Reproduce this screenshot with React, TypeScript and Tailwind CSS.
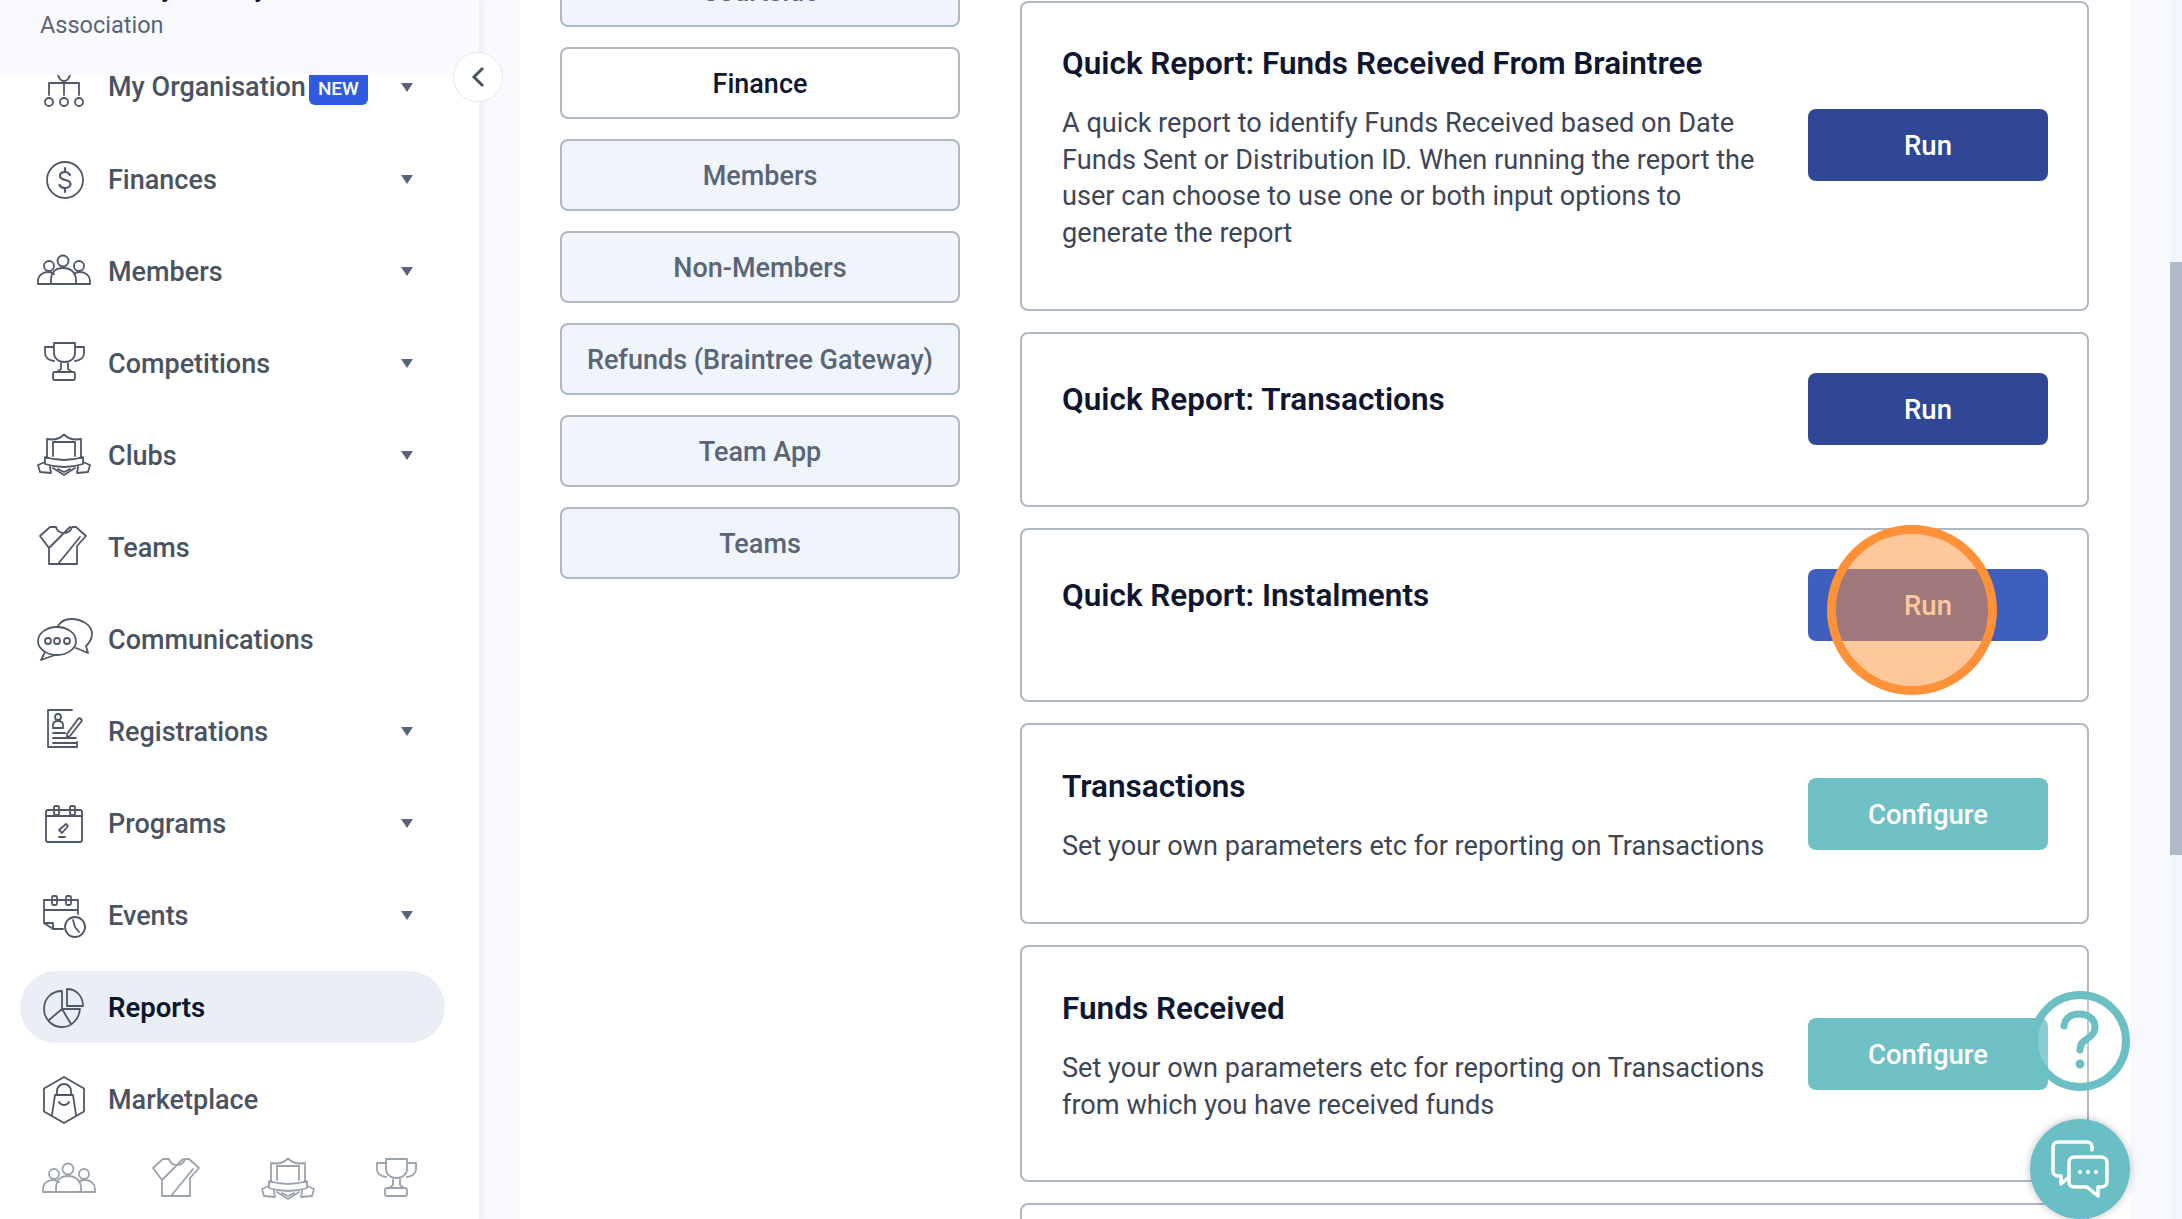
import React from 'react';

type IconProps = { className?: string };

const Ico = ({ className = 'text-[#4f5868]', children }: IconProps & { children: React.ReactNode }) => (
  <svg width={56} height={56} viewBox="0 0 56 56" fill="none" stroke="currentColor" strokeWidth={1.8} strokeLinecap="round" strokeLinejoin="round" className={className}>
    {children}
  </svg>
);

const OrgIcon = (p: IconProps) => (
  <Ico {...p}>
    <path d="M21 16c1 4 3 6 6 6s5-2 6-6M27 22v14M12 36V24h30v12" />
    <circle cx="12" cy="43" r="4" /><circle cx="27" cy="43" r="4" /><circle cx="42" cy="43" r="4" />
  </Ico>
);
const DollarIcon = (p: IconProps) => (
  <Ico {...p}>
    <circle cx="28" cy="29" r="18" />
    <path d="M33 24c-1-2-3-3-5-3-3 0-5 1.500-5 4 0 5.500 10.500 2.500 10.500 8 0 2.500-2.500 4-5.500 4-2.500 0-4.500-1-5.500-3M28 17v4M28 37v4" strokeWidth={2.2} />
  </Ico>
);
const MembersIcon = (p: IconProps) => (
  <Ico {...p}>
    <circle cx="26" cy="18" r="5.500" /><circle cx="12" cy="23" r="5" /><circle cx="42" cy="23" r="5" />
    <path d="M1 41v-3c0-5 4-9 10-9 3 0 5 1 6 2M53 41v-3c0-5-4-9-10-9-3 0-5 1-6 2M14 41v-4c0-8 5-12 12-12s13 4 13 12v4M1 41h52" />
  </Ico>
);
const TrophyIcon = (p: IconProps) => (
  <Ico {...p}>
    <path d="M17 8h21v10c0 5-4 9-10.500 9S17 23 17 18zM17 12H8v6c0 4 3 7 9 8M38 12h9v6c0 4-3 7-9 8M24 27v7l-4 3M31 27v7l4 3" />
    <rect x="16" y="37" width="22" height="8" rx="2" />
  </Ico>
);
const ClubIcon = (p: IconProps) => (
  <Ico {...p}>
    <path d="M10 31V12l5 .5c4 0 9-2 12-5 3 3 8 5 12 5l5-.5v19M16 29V15h22v14M16 41l11 7 11-7M21 42l6 3 6-3" />
    <path d="M8 30c6 2 12 3 19 3s13-1 19-3v7c-6 2-12 3-19 3s-13-1-19-3zM8 35l-7 3 2 7 11 1-1-6M46 35l7 3-2 7-11 1 1-6" />
  </Ico>
);
const TeamsIcon = (p: IconProps) => (
  <Ico {...p}>
    <path d="M13 8L3 17l9 12v16h28V27l9-10-10-9h-4c-1 4-4 6-8 6s-7-2-8-6zM21 45l22-27M12 29l21-21" />
  </Ico>
);
const CommsIcon = (p: IconProps) => (
  <Ico {...p}>
    <path d="M21 15c3-5 8-7 13-7 11 0 21 6 21 15 0 6-3 9-6 12l2 7-12-5" />
    <ellipse cx="20" cy="30" rx="19" ry="14" />
    <path d="M8 41l-4 8 14-5" />
    <circle cx="11" cy="30" r="3" /><circle cx="20" cy="30" r="3" /><circle cx="30" cy="30" r="3" />
  </Ico>
);
const RegIcon = (p: IconProps) => (
  <Ico {...p}>
    <path d="M35 7H11v37h29v-5" />
    <circle cx="21" cy="14" r="3" />
    <path d="M16 25v-3c0-3 2-4 5-4s5 1 5 4v3zM16 30h12M16 35h23M16 40h23M30 31l11-15c1-1 2-1 3 0s1 2 0 3L33 33l-3 1z" />
  </Ico>
);
const ProgramIcon = (p: IconProps) => (
  <Ico {...p}>
    <rect x="9" y="15" width="36" height="32" rx="2" />
    <path d="M9 21h36" />
    <rect x="17" y="11" width="5" height="9" rx="1.500" /><rect x="33" y="11" width="5" height="9" rx="1.500" />
    <path d="M22 35l7-6 2 2-6 7zM22 42h6" />
  </Ico>
);
const EventIcon = (p: IconProps) => (
  <Ico {...p}>
    <path d="M41 27V13H7v23l9 6h10M7 36h9v6M7 23h34" />
    <rect x="15" y="9" width="5" height="9" rx="1.500" /><rect x="29" y="9" width="5" height="9" rx="1.500" />
    <circle cx="38" cy="40" r="10" />
    <path d="M36 33l2 7 4 5" />
  </Ico>
);
const PieIcon = (p: IconProps) => (
  <Ico {...p}>
    <path d="M25 12C14 12 7 20 7 30s8 18 18 18c10 0 17-8 18-18H25zM25 30L12 41M25 30l9 15" />
    <path d="M30 10c9 0 16 7 16 17H30z" />
  </Ico>
);
const MarketIcon = (p: IconProps) => (
  <Ico {...p}>
    <path d="M27 6l20 11.500v23L27 52 7 40.500v-23z" />
    <path d="M15 44l3-20h18l3 20M20 24v-4c0-4 3-7 7-7s7 3 7 7v4M22 31c2 4 8 4 10 0" />
  </Ico>
);

const Arrow = () => <span className="h-0 w-0 border-l-[6px] border-r-[6px] border-t-[9px] border-l-transparent border-r-transparent border-t-[#5a6578]" />;

const nav = [
  { label: 'My Organisation', icon: <OrgIcon />, arrow: true, badge: true },
  { label: 'Finances', icon: <DollarIcon />, arrow: true },
  { label: 'Members', icon: <MembersIcon />, arrow: true },
  { label: 'Competitions', icon: <TrophyIcon />, arrow: true },
  { label: 'Clubs', icon: <ClubIcon />, arrow: true },
  { label: 'Teams', icon: <TeamsIcon /> },
  { label: 'Communications', icon: <CommsIcon /> },
  { label: 'Registrations', icon: <RegIcon />, arrow: true },
  { label: 'Programs', icon: <ProgramIcon />, arrow: true },
  { label: 'Events', icon: <EventIcon />, arrow: true },
  { label: 'Reports', icon: <PieIcon />, active: true },
  { label: 'Marketplace', icon: <MarketIcon /> },
];

const shortcuts = [
  { label: 'Members', icon: <MembersIcon className="text-[#9aa3ae]" />, cls: 'ml-0' },
  { label: 'Teams', icon: <TeamsIcon className="text-[#9aa3ae]" />, cls: 'ml-[52px]' },
  { label: 'Clubs', icon: <ClubIcon className="text-[#9aa3ae]" />, cls: 'ml-[55px]' },
  { label: 'Comps', icon: <TrophyIcon className="text-[#9aa3ae]" />, cls: 'ml-[52px]' },
];

const tabs = ['Courtside', 'Finance', 'Members', 'Non-Members', 'Refunds (Braintree Gateway)', 'Team App', 'Teams'];

const cards = [
  { title: 'Quick Report: Funds Received From Braintree', desc: ['A quick report to identify Funds Received based on Date', 'Funds Sent or Distribution ID. When running the report the', 'user can choose to use one or both input options to', 'generate the report'], cls: 'h-[310px] pt-[42px]', btn: 'Run', btnCls: 'mt-[64px] bg-[#2f4795]' },
  { title: 'Quick Report: Transactions', desc: [], cls: 'h-[175px] pt-[47px]', btn: 'Run', btnCls: 'mt-[-8px] bg-[#2f4795]' },
  { title: 'Quick Report: Instalments', desc: [], cls: 'h-[174px] pt-[47px]', btn: 'Run', btnCls: 'mt-[-8px] bg-[#3f5fbe]' },
  { title: 'Transactions', desc: ['Set your own parameters etc for reporting on Transactions'], cls: 'h-[201px] pt-[43px]', btn: 'Configure', btnCls: 'mt-[10px] bg-[#6fc1c5]' },
  { title: 'Funds Received', desc: ['Set your own parameters etc for reporting on Transactions', 'from which you have received funds'], cls: 'h-[237px] pt-[43px]', btn: 'Configure', btnCls: 'mt-[28px] bg-[#6fc1c5]' },
];

export default function App() {
  return (
    <div className="relative flex h-[1219px] w-[2182px] overflow-hidden bg-[#f7f9fd] font-['Roboto',sans-serif]">
      {/* SIDEBAR */}
      <aside className="relative w-[480px] shrink-0 border-r border-[#eef1f6] bg-white shadow-[2px_0_6px_rgba(90,101,120,0.08)]">
        <div className="relative z-10 h-[75px] overflow-hidden bg-[#f8fafd] pl-[40px]">
          <div className="-mt-[29px] h-[34px] text-[26px] leading-[34px] font-medium text-[#0f1630]">Community Hockey</div>
          <div className="mt-[6px] text-[23.5px] leading-[28px] text-[#5a6578]">Association</div>
        </div>
        <nav className="-mt-[24px] flex flex-col gap-[20px] pl-[20px] pr-[34px]">
          {nav.map((n) => (
            <div key={n.label} className={`flex h-[72px] shrink-0 items-center rounded-full pl-[17px] pr-[32px] ${n.active ? 'bg-[#e9eff4] font-semibold text-[#0f1630]' : 'font-medium text-[#4a5362]'}`}>
              <span className="flex w-[56px] shrink-0 justify-center">{n.icon}</span>
              <span className={`ml-[15px] leading-[34px] ${n.badge ? 'mt-0' : 'mt-[2px]'} ${n.active ? 'text-[27.5px]' : 'text-[27px]'}`}>{n.label}</span>
              {n.badge && <span className="ml-[3px] mt-[4px] rounded-b-[6px] bg-[#2f5be0] px-[9px] py-[4px] text-[19px] leading-[24px] font-medium text-white">NEW</span>}
              {n.arrow && <span className="ml-auto flex"><Arrow /></span>}
            </div>
          ))}
        </nav>
        <div className="mt-[16px] flex pl-[42px]">
          {shortcuts.map((s) => (
            <div key={s.label} className={`flex w-[56px] shrink-0 flex-col items-center ${s.cls}`}>
              {s.icon}
              <span className="mt-[11px] text-[18px] leading-[22px] text-[#9aa3ae]">{s.label}</span>
            </div>
          ))}
        </div>
        <button className="absolute left-[453px] top-[52px] z-20 flex h-[50px] w-[50px] items-center justify-center rounded-full border border-[#e5e9ef] bg-white">
          <svg width="14" height="22" viewBox="0 0 14 22" fill="none" stroke="#4a5362" strokeWidth="3"><path d="M12 2L3 11l9 9" /></svg>
        </button>
      </aside>

      {/* MAIN */}
      <main className="ml-[40px] flex h-[1400px] w-[1610px] shrink-0 bg-white">
        <div className="ml-[40px] -mt-[45px] flex w-[400px] shrink-0 flex-col gap-[20px]">
          {tabs.map((t) => (
            <div key={t} className={`flex h-[72px] shrink-0 items-center justify-center rounded-[8px] border-2 border-[#b0b8c4] pt-[2px] text-[27px] font-medium ${t === 'Finance' ? 'bg-white text-[#0f1630]' : 'bg-[#f0f5fc] text-[#5a6578]'}`}>{t}</div>
          ))}
        </div>
        <div className="ml-[60px] mt-px flex w-[1069px] shrink-0 flex-col gap-[21px]">
          {cards.map((c) => (
            <div key={c.title} className={`flex shrink-0 justify-between rounded-[8px] border-2 border-[#b0b8c4] bg-white pl-[40px] pr-[39px] ${c.cls}`}>
              <div>
                <h3 className="text-[31.5px] leading-[38px] font-semibold text-[#0f1630]">{c.title}</h3>
                <div className="mt-[22px] text-[27.15px] leading-[36.5px] text-[#3d4656]">
                  {c.desc.map((d) => <div key={d}>{d}</div>)}
                </div>
              </div>
              <div className={`flex h-[72px] w-[240px] shrink-0 items-center justify-center rounded-[8px] pt-[2px] text-[27.5px] font-medium text-white ${c.btnCls}`}>{c.btn}</div>
            </div>
          ))}
          <div className="h-[200px] shrink-0 rounded-[8px] border-2 border-[#b0b8c4] bg-white" />
        </div>
      </main>

      {/* SCROLLBAR */}
      <div className="ml-[40px] w-[12px] shrink-0 bg-[#f3f6fd] pt-[262px]">
        <div className="h-[593px] w-full bg-[#b0bac8]" />
      </div>

      {/* OVERLAYS */}
      <div className="absolute left-[1827px] top-[525px] h-[170px] w-[170px] rounded-full border-[9px] border-[#ff9138] bg-[#ff9138]/50" />
      <div className="absolute left-[2030px] top-[991px] flex h-[100px] w-[100px] items-center justify-center rounded-full border-[8px] border-[#6cbfc3] bg-white/20 text-[#6cbfc3]">
        <svg width="40" height="62" viewBox="0 0 40 62" fill="none" stroke="currentColor" strokeWidth="7" strokeLinecap="round"><path d="M4 16C5 8 11 4 19 4c9 0 16 5 16 13 0 6-4 9-8 12-4 2-7 5-7 11" /><circle cx="20" cy="54" r="3.500" fill="currentColor" strokeWidth="2" /></svg>
      </div>
      <div className="absolute left-[2030px] top-[1119px] flex h-[100px] w-[100px] items-center justify-center rounded-full bg-[#69bfc4] shadow-[0_0_8px_rgba(0,0,0,0.25)]">
        <svg width="60" height="58" viewBox="0 0 60 58" fill="none" stroke="white" strokeWidth="3.500" strokeLinejoin="round" strokeLinecap="round">
          <path d="M42 10V7c0-3-2-5-5-5H8C5 2 3 4 3 7v24c0 3 2 5 5 5h3v8l8-7" />
          <path d="M24 17h27c3 0 6 2 6 5v20c0 3-3 5-6 5h-3v9l-11-9H24c-3 0-5-2-5-5V22c0-3 2-5 5-5z" />
          <path d="M30 32h.1M38 32h.1M46 32h.1" strokeWidth="4" />
        </svg>
      </div>
    </div>
  );
}
